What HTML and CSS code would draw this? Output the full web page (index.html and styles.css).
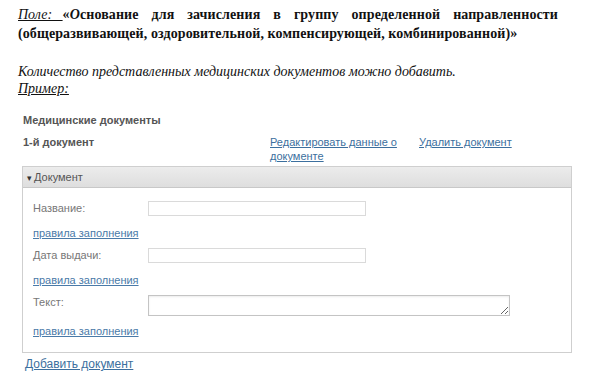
FILE: index.html
```html
<!DOCTYPE html>
<html lang="ru">
<head>
  <meta charset="UTF-8" />
  <title>Медицинские документы</title>
  <link rel="stylesheet" href="styles.css">
</head>
<body>
  <div class="note">
    <p class="field-title">
      <span class="title-line"><span class="field-name">Поле:&nbsp;&nbsp;&nbsp;</span>«<i>О</i>снование для зачисления в группу определенной направленности</span>
      <span class="title-line">(общеразвивающей, оздоровительной, компенсирующей, комбинированной)»</span>
    </p>
    <p class="hint">Количество представленных медицинских документов можно добавить.</p>
    <p class="example">Пример:</p>
  </div>

  <div class="docs">
    <h2 class="docs-title">Медицинские документы</h2>

    <div class="doc-head">
      <span class="doc-num">1-й документ</span>
      <a href="#" class="edit-link">Редактировать данные о документе</a>
      <a href="#" class="del-link">Удалить документ</a>
    </div>

    <div class="panel">
      <div class="panel-head"><span class="arrow">&#9662;</span>Документ</div>
      <div class="panel-body">
        <div class="field">
          <label>Название:</label>
          <input type="text" class="inp">
        </div>
        <a href="#" class="rules">правила заполнения</a>

        <div class="field">
          <label>Дата выдачи:</label>
          <input type="text" class="inp">
        </div>
        <a href="#" class="rules">правила заполнения</a>

        <div class="field">
          <label>Текст:</label>
          <textarea class="area"></textarea>
        </div>
        <a href="#" class="rules">правила заполнения</a>
      </div>
    </div>

    <a href="#" class="add-link">Добавить документ</a>
  </div>
</body>
</html>
```

FILE: styles.css
```css
* {
  box-sizing: border-box;
  margin: 0;
  padding: 0;
}
body {
  background: #fff;
  font-family: 'Liberation Sans', Arial, sans-serif;
  color: #333;
}
.note {
  font-family: 'Liberation Serif', 'Times New Roman', serif;
  color: #111;
  padding: 5px 0 0 18px;
}
.field-title {
  width: 540px;
  font-size: 14px;
  font-weight: bold;
  letter-spacing: 0.1px;
  line-height: 19px;
}
.title-line {
  display: block;
}
.title-line:first-child {
  text-align: justify;
  text-align-last: justify;
}
.field-name {
  display: inline-block;
  font-size: 14px;
  font-style: italic;
  font-weight: normal;
  letter-spacing: 0;
  text-decoration: underline;
}
.hint {
  font-size: 14px;
  font-style: italic;
  line-height: 17px;
  margin-top: 20px;
}
.example {
  font-size: 14px;
  font-style: italic;
  line-height: 17px;
  text-decoration: underline;
}

.docs {
  padding: 16px 0 0 23px;
  font-size: 11px;
}
.docs-title {
  font-size: 11px;
  font-weight: bold;
  color: #555;
  line-height: 14px;
}
.doc-head {
  display: flex;
  margin-top: 8px;
  line-height: 14px;
}
.doc-num {
  width: 247px;
  font-weight: bold;
  color: #555;
}
a {
  color: #3c6f9e;
  text-decoration: underline;
}
.edit-link {
  width: 134px;
  margin-right: 15px;
}
.panel {
  width: 550px;
  margin: 3px 0 0 -1px;
  border: 1px solid #cfcfcf;
}
.panel-head {
  height: 21px;
  line-height: 20px;
  padding-left: 4px;
  color: #555;
  background: linear-gradient(#ececec, #dedede);
  border-bottom: 1px solid #c8c8c8;
}
.arrow {
  font-size: 9px;
  margin-right: 2px;
  color: #333;
}
.panel-body {
  padding: 13px 0 14px 10px;
  display: flex;
  flex-direction: column;
  align-items: flex-start;
}
.field {
  display: flex;
  align-items: flex-start;
}
.field label {
  width: 115px;
  line-height: 15px;
  color: #777;
}
.inp {
  width: 218px;
  height: 15px;
  border: 1px solid #dadada;
  background: #fff;
}
.area {
  width: 362px;
  height: 21px;
  border: 1px solid #c4c4c4;
  box-shadow: inset 0 1px 2px rgba(0,0,0,0.08);
  resize: vertical;
  background: #fff;
}
.rules {
  line-height: 14px;
  margin: 10px 0 8px;
  color: #4a7aa8;
}
.panel-body .rules:last-child {
  margin: 8px 0 0;
}
.add-link {
  display: inline-block;
  margin: 4px 0 0 2px;
  font-size: 12px;
  line-height: 15px;
}
```
